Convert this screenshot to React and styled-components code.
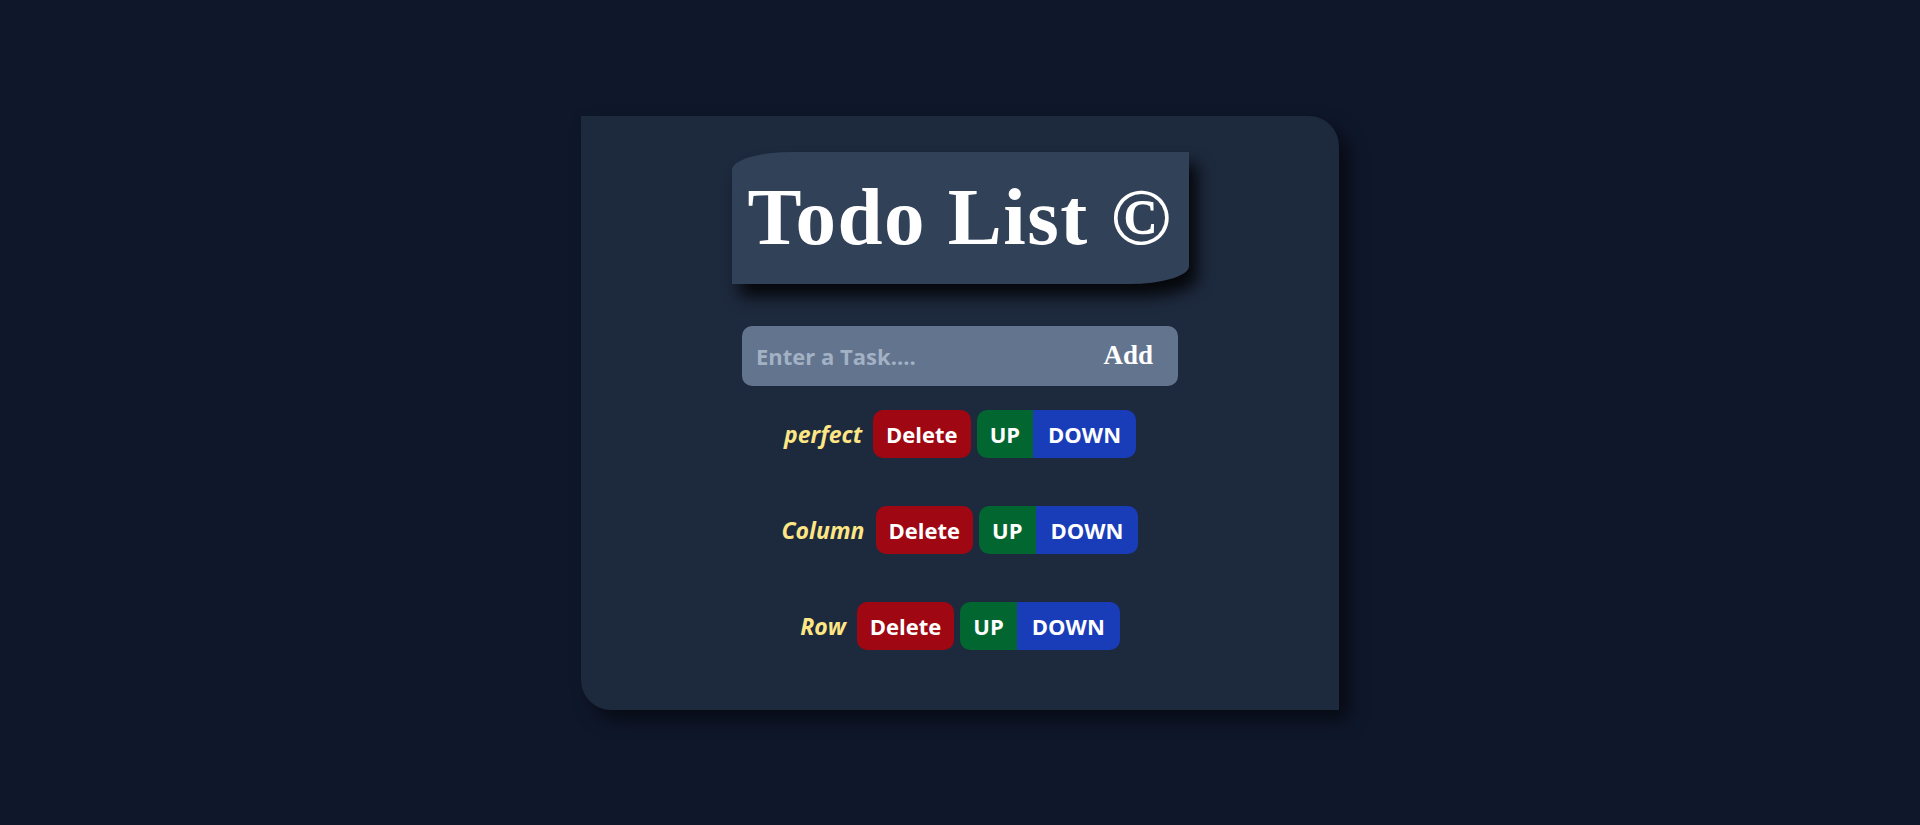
import React, { useState } from 'react';
import styled, { createGlobalStyle } from 'styled-components';

const GlobalStyle = createGlobalStyle`
  body {
    margin: 0;
    background-color: #0f172b;
    font-family: "Open Sans", "Noto Sans", sans-serif;
  }
`;

const Page = styled.div`
  min-height: 100vh;
  display: flex;
  align-items: center;
  justify-content: center;
`;

const Card = styled.div`
  width: 758px;
  box-sizing: border-box;
  padding: 36px 0 60px;
  background-color: #1d293d;
  border-radius: 0 30px 0 30px;
  box-shadow: 10px 10px 18px rgba(0, 0, 0, 0.55);
  display: flex;
  flex-direction: column;
  align-items: center;
`;

const Title = styled.h1`
  margin: 0;
  width: 457px;
  height: 132px;
  box-sizing: border-box;
  display: flex;
  align-items: center;
  justify-content: center;
  background-color: #314158;
  color: white;
  font-family: "Liberation Serif", serif;
  font-weight: 700;
  font-size: 81px;
  letter-spacing: 1.5px;
  border-radius: 60px 0 / 18px 0;
  box-shadow: 8px 12px 16px rgba(0, 0, 0, 0.85);
`;

const InputBar = styled.form`
  margin-top: 42px;
  width: 436px;
  height: 60px;
  box-sizing: border-box;
  display: flex;
  align-items: center;
  background-color: #62748e;
  border-radius: 10px;
  padding: 0 25px 0 12px;
`;

const TaskInput = styled.input`
  flex: 1;
  min-width: 0;
  background: transparent;
  border: none;
  outline: none;
  color: white;
  font-family: "Open Sans", sans-serif;
  font-weight: 700;
  font-size: 22px;

  &::placeholder {
    color: #a3b1c4;
  }
`;

const AddButton = styled.button`
  background: transparent;
  border: none;
  padding: 0;
  color: white;
  font-family: "Liberation Serif", serif;
  font-weight: 700;
  font-size: 27px;
  cursor: pointer;
`;

const List = styled.ul`
  list-style: none;
  margin: 24px 0 0;
  padding: 0;
  display: flex;
  flex-direction: column;
  align-items: center;
  gap: 48px;
`;

const Item = styled.li`
  display: flex;
  align-items: center;
  height: 48px;
`;

const Label = styled.span`
  color: #fee685;
  font-style: italic;
  font-weight: 700;
  font-size: 23px;
  margin-right: 11px;
`;

const Button = styled.button`
  height: 48px;
  border: none;
  padding: 0 ${p => p.$pad || 13}px;
  color: white;
  font-family: "Open Sans", sans-serif;
  font-weight: 700;
  font-size: 22px;
  background-color: ${p => p.$bg};
  border-radius: ${p => p.$radius || '10px'};
  cursor: pointer;
`;

const MoveGroup = styled.div`
  display: flex;
  margin-left: 6px;
  border-radius: 10px;
  overflow: hidden;
`;

function App() {
  const [tasks] = useState(['perfect', 'Column', 'Row']);

  return (
    <Page>
      <GlobalStyle />
      <Card>
        <Title>Todo List ©</Title>
        <InputBar onSubmit={e => e.preventDefault()}>
          <TaskInput placeholder="Enter a Task...." />
          <AddButton type="submit">Add</AddButton>
        </InputBar>
        <List>
          {tasks.map(task => (
            <Item key={task}>
              <Label>{task}</Label>
              <Button $bg="#9f0712">Delete</Button>
              <MoveGroup>
                <Button $bg="#016630" $radius="0">UP</Button>
                <Button $bg="#193cb8" $radius="0" $pad={15}>DOWN</Button>
              </MoveGroup>
            </Item>
          ))}
        </List>
      </Card>
    </Page>
  );
}

export default App;
